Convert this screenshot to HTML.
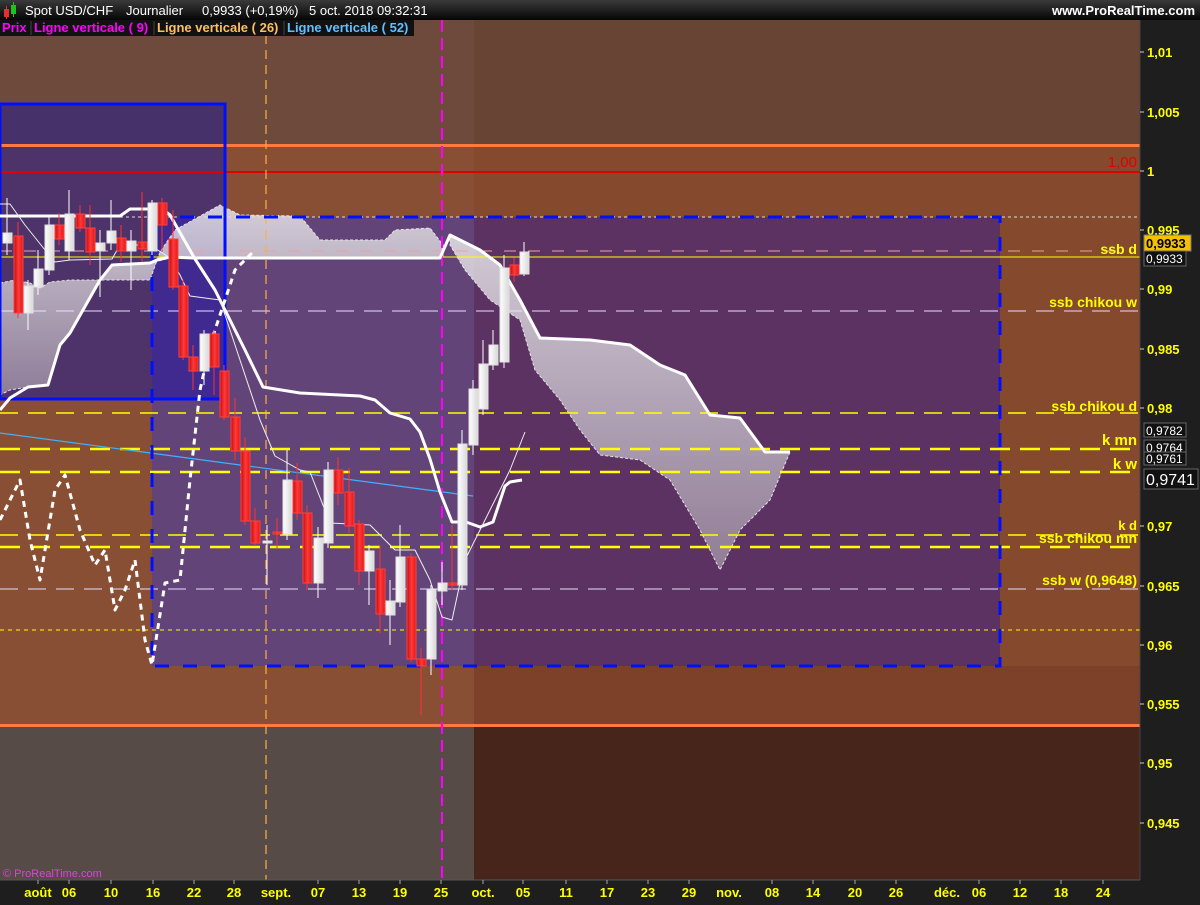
<!DOCTYPE html><html><head><meta charset="utf-8"><style>
body{margin:0;width:1200px;height:900px;overflow:hidden;background:#1e1e1e;font-family:"Liberation Sans",sans-serif}
</style></head><body>
<svg width="1200" height="900" xmlns="http://www.w3.org/2000/svg" font-family="Liberation Sans, sans-serif">
<defs>
<linearGradient id="hd" x1="0" y1="0" x2="0" y2="1"><stop offset="0" stop-color="#3a3a3a"/><stop offset="1" stop-color="#050505"/></linearGradient>
<linearGradient id="cl" x1="0" y1="0" x2="0" y2="1"><stop offset="0" stop-color="#e8e6ea"/><stop offset="1" stop-color="#9a8aa0"/></linearGradient>
<linearGradient id="rc" x1="0" y1="0" x2="1" y2="0"><stop offset="0" stop-color="#c80c0c"/><stop offset="0.5" stop-color="#ff3a3a"/><stop offset="1" stop-color="#e01818"/></linearGradient>
<linearGradient id="wc" x1="0" y1="0" x2="1" y2="0"><stop offset="0" stop-color="#ffffff"/><stop offset="1" stop-color="#d8d8d8"/></linearGradient>
</defs>
<rect x="0" y="20" width="1140" height="125" fill="#684434"/>
<rect x="0" y="145" width="1140" height="580" fill="#85492e"/>
<rect x="0" y="725" width="1140" height="155" fill="#47251a"/>
<rect x="0" y="20" width="474" height="860" fill="#ffffff" opacity="0.035"/>
<rect x="0" y="725" width="474" height="155" fill="#564b46"/>
<rect x="474" y="666" width="666" height="59" fill="#7c4128"/>
<rect x="152" y="217" width="848" height="449" fill="#5c3262"/>
<rect x="152" y="217" width="322" height="449" fill="#634478"/>
<rect x="0" y="104" width="225" height="295" fill="#3a2a7c" opacity="0.75"/>
<rect x="152" y="217" width="73" height="182" fill="#402a90"/>
<rect x="0" y="144" width="1140" height="3" fill="#ff7a40"/>
<rect x="0" y="724" width="1140" height="3" fill="#ff7a40"/>
<rect x="0" y="171" width="1140" height="2" fill="#e00000"/>
<polygon fill="url(#cl)" opacity="0.85" stroke="#fff" stroke-dasharray="3,2" stroke-width="1" points="0,283 15,280 30,283 40,288 50,282 70,280 150,280 160,252 175,230 220,205 240,215 300,216 320,240 385,240 395,230 430,228 443,245 443,258 170,258 150,263 112,265 100,280 83,310 70,333 60,345 48,385 28,387 10,390 0,395"/>
<polygon fill="url(#cl)" opacity="0.85" stroke="#fff" stroke-dasharray="3,2" stroke-width="1" points="450,235 460,240 480,250 500,265 520,300 540,338 590,340 630,345 660,365 685,375 710,415 740,418 765,452 790,452 770,500 740,530 720,570 700,530 670,480 640,460 600,455 580,430 560,400 535,370 520,320 490,300 465,270 450,245"/>
<g fill="none">
<line x1="0" y1="217" x2="1140" y2="217" stroke="#ddd" stroke-dasharray="3,3" stroke-width="1"/>
<line x1="0" y1="251" x2="1120" y2="251" stroke="#f0a0a0" stroke-dasharray="12,12" stroke-width="1"/>
<line x1="0" y1="257" x2="1140" y2="257" stroke="#ffff00" stroke-width="1"/>
<line x1="0" y1="311" x2="1140" y2="311" stroke="#e8e0ff" stroke-dasharray="18,10" stroke-width="1"/>
<line x1="0" y1="413" x2="1140" y2="413" stroke="#ffff00" stroke-dasharray="18,10" stroke-width="1.5"/>
<line x1="0" y1="449" x2="1140" y2="449" stroke="#ffff00" stroke-dasharray="20,10" stroke-width="2.5"/>
<line x1="0" y1="472" x2="1140" y2="472" stroke="#ffff00" stroke-dasharray="20,10" stroke-width="2.5"/>
<line x1="0" y1="535" x2="1140" y2="535" stroke="#ffff00" stroke-dasharray="18,10" stroke-width="1.5"/>
<line x1="0" y1="547" x2="1140" y2="547" stroke="#ffff00" stroke-dasharray="20,10" stroke-width="2.5"/>
<line x1="0" y1="589" x2="1140" y2="589" stroke="#e8e0ff" stroke-dasharray="18,10" stroke-width="1"/>
<line x1="0" y1="630" x2="1140" y2="630" stroke="#ffff00" stroke-dasharray="4,4" stroke-width="1"/>
<line x1="0" y1="433" x2="473" y2="496" stroke="#40b0ff" stroke-width="1.2"/>
<line x1="266" y1="20" x2="266" y2="880" stroke="#ffb040" stroke-dasharray="9,6" stroke-width="1.2"/>
<line x1="442" y1="20" x2="442" y2="880" stroke="#ff00ff" stroke-dasharray="12,6" stroke-width="2"/>
</g>
<rect x="152" y="217" width="848" height="449" fill="none" stroke="#0010ff" stroke-width="3" stroke-dasharray="14,14"/>
<rect x="0" y="104" width="225" height="295" fill="none" stroke="#0010ff" stroke-width="3"/>
<g fill="none" stroke-linejoin="round">
<polyline stroke="#fff" stroke-width="3" points="0,216 120,216 130,209 162,209 170,215 195,259 215,290 230,320 245,350 263,387 300,393 360,396 375,400 390,413 410,419 420,432 430,459 440,492 452,522 466,522 480,527 493,522 505,486 510,482 522,480"/>
<polyline stroke="#fff" stroke-width="3" points="0,410 10,398 28,387 48,385 60,345 70,333 83,310 100,280 112,265 150,263 157,260 170,257 193,258 440,258 450,235 460,240 480,250 500,265 520,300 540,338 590,340 630,345 660,365 685,375 710,415 740,418 765,452 790,452"/>
<polyline stroke="#eee" stroke-width="1" points="0,204 10,204 25,225 45,250 55,262 70,260 112,259 120,245 150,245 170,258 180,275 190,296 220,300 240,360 260,420 275,456 300,470 310,472 330,523 370,525 380,535 395,550 415,550 430,580 442,617 452,620 465,560 480,530 495,500 510,470 525,432"/>
<polyline stroke="#fff" stroke-width="3" stroke-dasharray="6,5" points="0,520 20,480 30,540 40,580 55,490 65,475 80,530 95,565 105,550 115,610 125,590 135,560 145,640 152,665 165,583 180,580 190,480 200,390 210,345 225,300 235,270 255,250"/>
</g>
<g stroke-width="1">
<g stroke="#fff">
<line x1="7" y1="198" x2="7" y2="255"/><line x1="28" y1="280" x2="28" y2="330"/><line x1="38" y1="250" x2="38" y2="295"/><line x1="49" y1="215" x2="49" y2="275"/><line x1="69" y1="190" x2="69" y2="260"/><line x1="100" y1="230" x2="100" y2="297"/><line x1="111" y1="200" x2="111" y2="250"/><line x1="131" y1="230" x2="131" y2="290"/><line x1="152" y1="200" x2="152" y2="255"/><line x1="204" y1="330" x2="204" y2="385"/><line x1="267" y1="525" x2="267" y2="585"/><line x1="287" y1="450" x2="287" y2="540"/><line x1="318" y1="527" x2="318" y2="598"/><line x1="328" y1="462" x2="328" y2="548"/><line x1="369" y1="545" x2="369" y2="605"/><line x1="390" y1="580" x2="390" y2="645"/><line x1="400" y1="525" x2="400" y2="607"/><line x1="431" y1="585" x2="431" y2="675"/><line x1="442" y1="562" x2="442" y2="605"/><line x1="462" y1="430" x2="462" y2="590"/><line x1="473" y1="380" x2="473" y2="455"/><line x1="483" y1="340" x2="483" y2="415"/><line x1="493" y1="330" x2="493" y2="370"/><line x1="504" y1="255" x2="504" y2="368"/><line x1="524" y1="242" x2="524" y2="276"/>
</g>
<g stroke="#ff3030">
<line x1="18" y1="222" x2="18" y2="318"/><line x1="59" y1="213" x2="59" y2="245"/><line x1="80" y1="205" x2="80" y2="232"/><line x1="90" y1="205" x2="90" y2="265"/><line x1="121" y1="225" x2="121" y2="262"/><line x1="142" y1="192" x2="142" y2="262"/><line x1="162" y1="198" x2="162" y2="252"/><line x1="173" y1="210" x2="173" y2="290"/><line x1="183" y1="280" x2="183" y2="360"/><line x1="193" y1="345" x2="193" y2="390"/><line x1="214" y1="330" x2="214" y2="395"/><line x1="224" y1="365" x2="224" y2="420"/><line x1="235" y1="398" x2="235" y2="460"/><line x1="245" y1="437" x2="245" y2="525"/><line x1="255" y1="508" x2="255" y2="546"/><line x1="277" y1="518" x2="277" y2="548"/><line x1="297" y1="463" x2="297" y2="520"/><line x1="307" y1="505" x2="307" y2="590"/><line x1="338" y1="457" x2="338" y2="505"/><line x1="349" y1="468" x2="349" y2="533"/><line x1="359" y1="520" x2="359" y2="585"/><line x1="380" y1="546" x2="380" y2="633"/><line x1="411" y1="553" x2="411" y2="662"/><line x1="421" y1="648" x2="421" y2="715"/><line x1="452" y1="525" x2="452" y2="590"/><line x1="514" y1="258" x2="514" y2="282"/>
</g>
<g fill="url(#wc)" stroke="#e0e0e0">
<rect x="3" y="233" width="9" height="10"/><rect x="24" y="286" width="9" height="27"/><rect x="34" y="269" width="9" height="18"/><rect x="45" y="225" width="9" height="45"/><rect x="65" y="214" width="9" height="37"/><rect x="96" y="243" width="9" height="8"/><rect x="107" y="231" width="9" height="12"/><rect x="127" y="241" width="9" height="10"/><rect x="148" y="203" width="9" height="48"/><rect x="200" y="334" width="9" height="37"/><rect x="263" y="541" width="9" height="2"/><rect x="283" y="480" width="9" height="54"/><rect x="314" y="538" width="9" height="45"/><rect x="324" y="470" width="9" height="73"/><rect x="365" y="551" width="9" height="20"/><rect x="386" y="601" width="9" height="14"/><rect x="396" y="557" width="9" height="45"/><rect x="427" y="590" width="9" height="69"/><rect x="438" y="583" width="9" height="8"/><rect x="458" y="444" width="9" height="141"/><rect x="469" y="389" width="9" height="56"/><rect x="479" y="364" width="9" height="45"/><rect x="489" y="345" width="9" height="20"/><rect x="500" y="268" width="9" height="94"/><rect x="520" y="252" width="9" height="22"/>
</g>
<g fill="url(#rc)" stroke="#ff4040">
<rect x="14" y="236" width="9" height="77"/><rect x="55" y="225" width="9" height="14"/><rect x="76" y="214" width="9" height="14"/><rect x="86" y="228" width="9" height="24"/><rect x="117" y="238" width="9" height="13"/><rect x="138" y="242" width="9" height="7"/><rect x="158" y="203" width="9" height="22"/><rect x="169" y="239" width="9" height="48"/><rect x="179" y="286" width="9" height="71"/><rect x="189" y="357" width="9" height="14"/><rect x="210" y="334" width="9" height="33"/><rect x="220" y="371" width="9" height="46"/><rect x="231" y="417" width="9" height="34"/><rect x="241" y="451" width="9" height="70"/><rect x="251" y="521" width="9" height="22"/><rect x="273" y="532" width="9" height="2"/><rect x="293" y="481" width="9" height="32"/><rect x="303" y="513" width="9" height="70"/><rect x="334" y="470" width="9" height="23"/><rect x="345" y="492" width="9" height="34"/><rect x="355" y="524" width="9" height="47"/><rect x="376" y="569" width="9" height="45"/><rect x="407" y="557" width="9" height="102"/><rect x="417" y="659" width="9" height="7"/><rect x="448" y="583" width="9" height="2"/><rect x="510" y="265" width="9" height="10"/>
</g>
</g>
<g fill="#ffff00" font-weight="bold" font-size="14" text-anchor="end">
<text x="1137" y="167" fill="#e00000" font-weight="normal" font-size="15">1,00</text>
<text x="1137" y="254">ssb d</text>
<text x="1137" y="307">ssb chikou w</text>
<text x="1137" y="411">ssb chikou d</text>
<text x="1137" y="445" font-size="15">k mn</text>
<text x="1137" y="469" font-size="15">k w</text>
<text x="1137" y="530" font-size="13">k d</text>
<text x="1137" y="543">ssb chikou mn</text>
<text x="1137" y="585">ssb w (0,9648)</text>
</g>
<rect x="1140" y="20" width="60" height="880" fill="#1e1e1e"/>
<line x1="1140" y1="20" x2="1140" y2="880" stroke="#444"/>
<g fill="#ffff00" font-size="13" font-weight="bold">
<text x="1147" y="57">1,01</text><text x="1147" y="117">1,005</text><text x="1147" y="176">1</text><text x="1147" y="235">0,995</text><text x="1147" y="294">0,99</text><text x="1147" y="354">0,985</text><text x="1147" y="413">0,98</text><text x="1147" y="531">0,97</text><text x="1147" y="591">0,965</text><text x="1147" y="650">0,96</text><text x="1147" y="709">0,955</text><text x="1147" y="768">0,95</text><text x="1147" y="828">0,945</text>
</g>
<g stroke="#ccc"><line x1="1140" y1="52" x2="1144" y2="52"/><line x1="1140" y1="112" x2="1144" y2="112"/><line x1="1140" y1="171" x2="1144" y2="171"/><line x1="1140" y1="230" x2="1144" y2="230"/><line x1="1140" y1="289" x2="1144" y2="289"/><line x1="1140" y1="349" x2="1144" y2="349"/><line x1="1140" y1="408" x2="1144" y2="408"/><line x1="1140" y1="526" x2="1144" y2="526"/><line x1="1140" y1="586" x2="1144" y2="586"/><line x1="1140" y1="645" x2="1144" y2="645"/><line x1="1140" y1="704" x2="1144" y2="704"/><line x1="1140" y1="763" x2="1144" y2="763"/><line x1="1140" y1="823" x2="1144" y2="823"/></g>
<rect x="1144" y="235" width="47" height="16" fill="#f5c000" stroke="#777"/><text x="1146" y="248" font-size="13" font-weight="bold" fill="#000">0,9933</text>
<rect x="1144" y="251" width="42" height="15" fill="#111" stroke="#666"/><text x="1146" y="263" font-size="12" fill="#fff">0,9933</text>
<rect x="1144" y="423" width="42" height="14" fill="#111" stroke="#666"/><text x="1146" y="435" font-size="12" fill="#fff">0,9782</text>
<rect x="1144" y="440" width="42" height="12" fill="#111" stroke="#666"/><text x="1146" y="452" font-size="12" fill="#fff">0,9764</text>
<rect x="1144" y="452" width="42" height="13" fill="#111" stroke="#666"/><text x="1146" y="463" font-size="12" fill="#fff">0,9761</text>
<rect x="1144" y="469" width="54" height="20" fill="#111" stroke="#666"/><text x="1146" y="485" font-size="16" fill="#fff">0,9741</text>
<rect x="0" y="880" width="1200" height="20" fill="#1e1e1e"/>
<line x1="0" y1="880" x2="1140" y2="880" stroke="#555"/>
<g fill="#ffff00" font-size="13" font-weight="bold" text-anchor="middle">
<text x="38" y="897">août</text><text x="69" y="897">06</text><text x="111" y="897">10</text><text x="153" y="897">16</text><text x="194" y="897">22</text><text x="234" y="897">28</text><text x="276" y="897">sept.</text><text x="318" y="897">07</text><text x="359" y="897">13</text><text x="400" y="897">19</text><text x="441" y="897">25</text><text x="483" y="897">oct.</text><text x="523" y="897">05</text><text x="566" y="897">11</text><text x="607" y="897">17</text><text x="648" y="897">23</text><text x="689" y="897">29</text><text x="729" y="897">nov.</text><text x="772" y="897">08</text><text x="813" y="897">14</text><text x="855" y="897">20</text><text x="896" y="897">26</text><text x="947" y="897">déc.</text><text x="979" y="897">06</text><text x="1020" y="897">12</text><text x="1061" y="897">18</text><text x="1103" y="897">24</text>
</g>
<g stroke="#aaa"><line x1="38" y1="880" x2="38" y2="884"/><line x1="69" y1="880" x2="69" y2="884"/><line x1="111" y1="880" x2="111" y2="884"/><line x1="153" y1="880" x2="153" y2="884"/><line x1="194" y1="880" x2="194" y2="884"/><line x1="234" y1="880" x2="234" y2="884"/><line x1="318" y1="880" x2="318" y2="884"/><line x1="359" y1="880" x2="359" y2="884"/><line x1="400" y1="880" x2="400" y2="884"/><line x1="441" y1="880" x2="441" y2="884"/><line x1="483" y1="880" x2="483" y2="884"/><line x1="523" y1="880" x2="523" y2="884"/><line x1="566" y1="880" x2="566" y2="884"/><line x1="607" y1="880" x2="607" y2="884"/><line x1="648" y1="880" x2="648" y2="884"/><line x1="689" y1="880" x2="689" y2="884"/><line x1="772" y1="880" x2="772" y2="884"/><line x1="813" y1="880" x2="813" y2="884"/><line x1="855" y1="880" x2="855" y2="884"/><line x1="896" y1="880" x2="896" y2="884"/><line x1="979" y1="880" x2="979" y2="884"/><line x1="1020" y1="880" x2="1020" y2="884"/><line x1="1061" y1="880" x2="1061" y2="884"/><line x1="1103" y1="880" x2="1103" y2="884"/></g>
<text x="3" y="877" font-size="11" fill="#e040e0">© ProRealTime.com</text>
<rect x="0" y="0" width="1200" height="20" fill="url(#hd)"/>
<rect x="4" y="9" width="5" height="8" fill="#e03030"/><line x1="6.5" y1="6" x2="6.5" y2="19" stroke="#e03030"/>
<rect x="11" y="5" width="5" height="9" fill="#20c020"/><line x1="13.5" y1="2" x2="13.5" y2="17" stroke="#20c020"/>
<g font-size="13" fill="#fff">
<text x="25" y="15">Spot USD/CHF</text>
<text x="126" y="15">Journalier</text>
<text x="202" y="15">0,9933 (+0,19%)</text>
<text x="309" y="15">5 oct. 2018 09:32:31</text>
</g>
<text x="1195" y="15" font-size="13" font-weight="bold" fill="#fff" text-anchor="end">www.ProRealTime.com</text>
<rect x="0" y="20" width="414" height="16" fill="#111"/>
<g font-size="13" font-weight="bold">
<text x="2" y="32" fill="#ff00ff">Prix</text>
<line x1="31" y1="21" x2="31" y2="35" stroke="#444"/>
<text x="34" y="32" fill="#ff00ff">Ligne verticale ( 9)</text>
<line x1="154" y1="21" x2="154" y2="35" stroke="#444"/>
<text x="157" y="32" fill="#ffc060">Ligne verticale ( 26)</text>
<line x1="284" y1="21" x2="284" y2="35" stroke="#444"/>
<text x="287" y="32" fill="#60c0ff">Ligne verticale ( 52)</text>
</g>
</svg>
</body></html>
